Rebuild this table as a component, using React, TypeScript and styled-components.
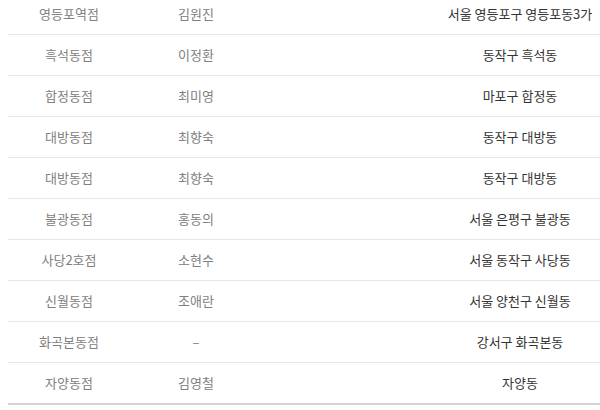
import React from 'react';
import styled, { createGlobalStyle } from 'styled-components';

const GlobalStyle = createGlobalStyle`
  html, body {
    margin: 0;
    padding: 0;
    background: #fff;
    overflow: hidden;
  }
  body {
    font-family: "Noto Sans CJK KR", "Noto Sans", sans-serif;
  }
`;

const Table = styled.div`
  margin: -6px 0 0 8px;
  display: flex;
  flex-direction: column;
`;

const Row = styled.div<{ $last?: boolean }>`
  display: grid;
  grid-template-columns: 122px 132px 178px 160px;
  height: 40px;
  align-items: center;
  border-bottom: ${p => (p.$last ? '2px solid #d4d4d4' : '1px solid #e6e6e6')};
`;

const Cell = styled.div<{ $dark?: boolean }>`
  text-align: center;
  font-size: 13px;
  font-weight: 400;
  line-height: 16px;
  color: ${p => (p.$dark ? '#333' : '#808080')};
  white-space: nowrap;
`;

const stores = [
  { name: '영등포역점', owner: '김원진', addr: '서울 영등포구 영등포동3가' },
  { name: '흑석동점', owner: '이정환', addr: '동작구 흑석동' },
  { name: '합정동점', owner: '최미영', addr: '마포구 합정동' },
  { name: '대방동점', owner: '최향숙', addr: '동작구 대방동' },
  { name: '대방동점', owner: '최향숙', addr: '동작구 대방동' },
  { name: '불광동점', owner: '홍동의', addr: '서울 은평구 불광동' },
  { name: '사당2호점', owner: '소현수', addr: '서울 동작구 사당동' },
  { name: '신월동점', owner: '조애란', addr: '서울 양천구 신월동' },
  { name: '화곡본동점', owner: '–', addr: '강서구 화곡본동' },
  { name: '자양동점', owner: '김영철', addr: '자양동' },
];

export default function App() {
  return (
    <>
      <GlobalStyle />
      <Table>
        {stores.map((s, i) => (
          <Row key={i} $last={i === stores.length - 1}>
            <Cell>{s.name}</Cell>
            <Cell>{s.owner}</Cell>
            <Cell />
            <Cell $dark>{s.addr}</Cell>
          </Row>
        ))}
      </Table>
    </>
  );
}
